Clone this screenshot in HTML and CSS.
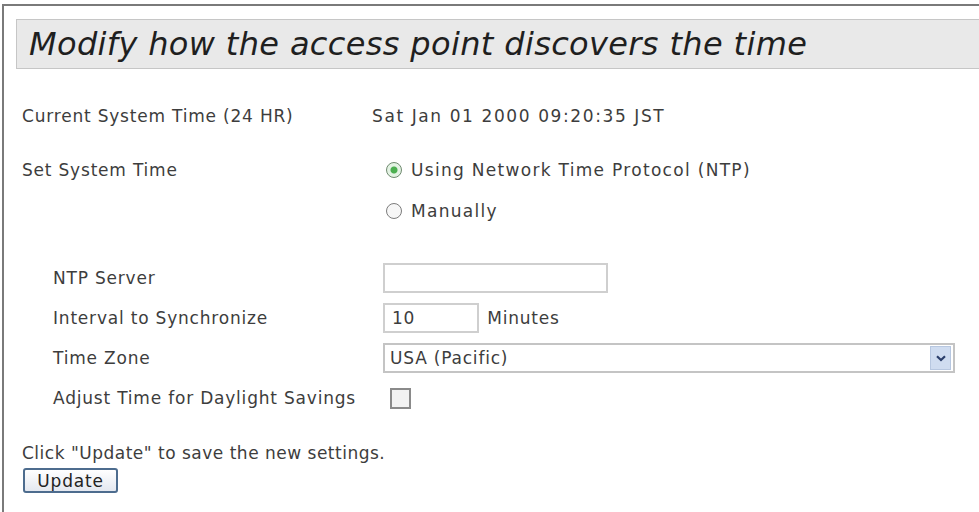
FILE: index.html
```html
<!DOCTYPE html>
<html lang="en">
<head>
  <meta charset="UTF-8" />
  <title>Time Settings</title>
  <link rel="stylesheet" href="styles.css">
</head>
<body>
  <div class="frame">
    <h1 class="title">Modify how the access point discovers the time</h1>

    <div class="content">
      <div class="row top">
        <span class="label">Current System Time (24 HR)</span>
        <span class="value">Sat Jan 01 2000 09:20:35 JST</span>
      </div>

      <div class="row set">
        <span class="label">Set System Time</span>
        <div class="radios">
          <label class="opt"><input type="radio" name="mode" checked> Using Network Time Protocol (NTP)</label>
          <label class="opt"><input type="radio" name="mode"> Manually</label>
        </div>
      </div>

      <div class="ntp">
        <div class="field">
          <span class="label">NTP Server</span>
          <input type="text" class="text server">
        </div>
        <div class="field">
          <span class="label">Interval to Synchronize</span>
          <div><input type="text" class="text interval" value="10"> <span class="unit">Minutes</span></div>
        </div>
        <div class="field">
          <span class="label">Time Zone</span>
          <div class="select">
            <span>USA (Pacific)</span>
            <span class="arrow">
              <svg width="10" height="7" viewBox="0 0 10 7"><path d="M1 1.2 L5 5 L9 1.2" fill="none" stroke="#2b3f6b" stroke-width="2.2"/></svg>
            </span>
          </div>
        </div>
        <div class="field">
          <span class="label">Adjust Time for Daylight Savings</span>
          <input type="checkbox" class="check">
        </div>
      </div>

      <p class="hint">Click "Update" to save the new settings.</p>
      <button class="update">Update</button>
    </div>
  </div>
</body>
</html>
```

FILE: styles.css
```css
body {
  margin: 0;
  overflow: hidden;
  background: white;
  font-family: "DejaVu Sans", Verdana, sans-serif;
  font-size: 17px;
  line-height: 20px;
  letter-spacing: 0.8px;
  color: #3d3d3d;
}
.frame {
  margin: 4px 0 0 2px;
  width: 1100px;
  height: 600px;
  border-top: 2px solid #7a7a7a;
  border-left: 2px solid #7a7a7a;
  padding-top: 13px;
  padding-left: 12px;
}
.title {
  margin: 0;
  height: 48px;
  line-height: 48px;
  padding-left: 12px;
  background: #e9e9e9;
  border: 1px solid #c6c6c6;
  border-right: none;
  font-size: 32px;
  letter-spacing: 0.35px;
  font-weight: normal;
  font-style: italic;
  color: #1f1f1f;
}
.content {
  padding-left: 6px;
}
.row {
  display: grid;
  grid-template-columns: 350px 1fr;
}
.row.top {
  margin-top: 37px;
}
.value {
  letter-spacing: 1.6px;
}
.row.set {
  margin-top: 34px;
  align-items: start;
}
.radios {
  display: flex;
  flex-direction: column;
  gap: 21px;
  padding-left: 14px;
  letter-spacing: 1.3px;
}
.opt {
  display: flex;
  align-items: center;
  gap: 9px;
}
.opt input {
  appearance: none;
  margin: 0;
  width: 16px;
  height: 16px;
  border: 1.5px solid #7c7c7c;
  border-radius: 50%;
  background: #f7f7f7;
  box-sizing: border-box;
}
.opt input:checked {
  background: radial-gradient(circle, #4caf50 0 3px, #e4f3e4 4px);
  border-color: #6f8a6f;
}
.ntp {
  margin-top: 42px;
  padding-left: 31px;
  display: grid;
  grid-auto-rows: 30px;
  row-gap: 10px;
}
.field {
  display: grid;
  grid-template-columns: 330px 1fr;
  align-items: center;
}
.text {
  margin: 0;
  height: 30px;
  box-sizing: border-box;
  border: 2px solid #cfcfcf;
  background: white;
  font: inherit;
  letter-spacing: inherit;
  color: #3d3d3d;
  padding: 0 7px;
}
.server {
  width: 225px;
}
.interval {
  width: 96px;
}
.unit {
  margin-left: 2px;
}
.select {
  width: 572px;
  height: 30px;
  box-sizing: border-box;
  border: 2px solid #c4c4c4;
  display: flex;
  align-items: center;
  justify-content: space-between;
  padding: 0 2px 0 5px;
}
.arrow {
  width: 19px;
  height: 22px;
  background: #cfdcf0;
  border: 1px solid #b7c7e0;
  display: flex;
  align-items: center;
  justify-content: center;
}
.check {
  appearance: none;
  margin: 0 0 0 7px;
  width: 21px;
  height: 21px;
  border: 2px solid #8a8a8a;
  background: #f2f2f2;
  box-sizing: border-box;
}
.hint {
  margin: 30px 0 5px;
  letter-spacing: 0.5px;
}
.update {
  margin-left: 1px;
  font: inherit;
  letter-spacing: inherit;
  color: #222;
  height: 25px;
  width: 95px;
  padding: 0;
  border: 2px solid #4d6c8e;
  border-radius: 3px;
  background: linear-gradient(#ffffff, #e4e8f0);
}
```
